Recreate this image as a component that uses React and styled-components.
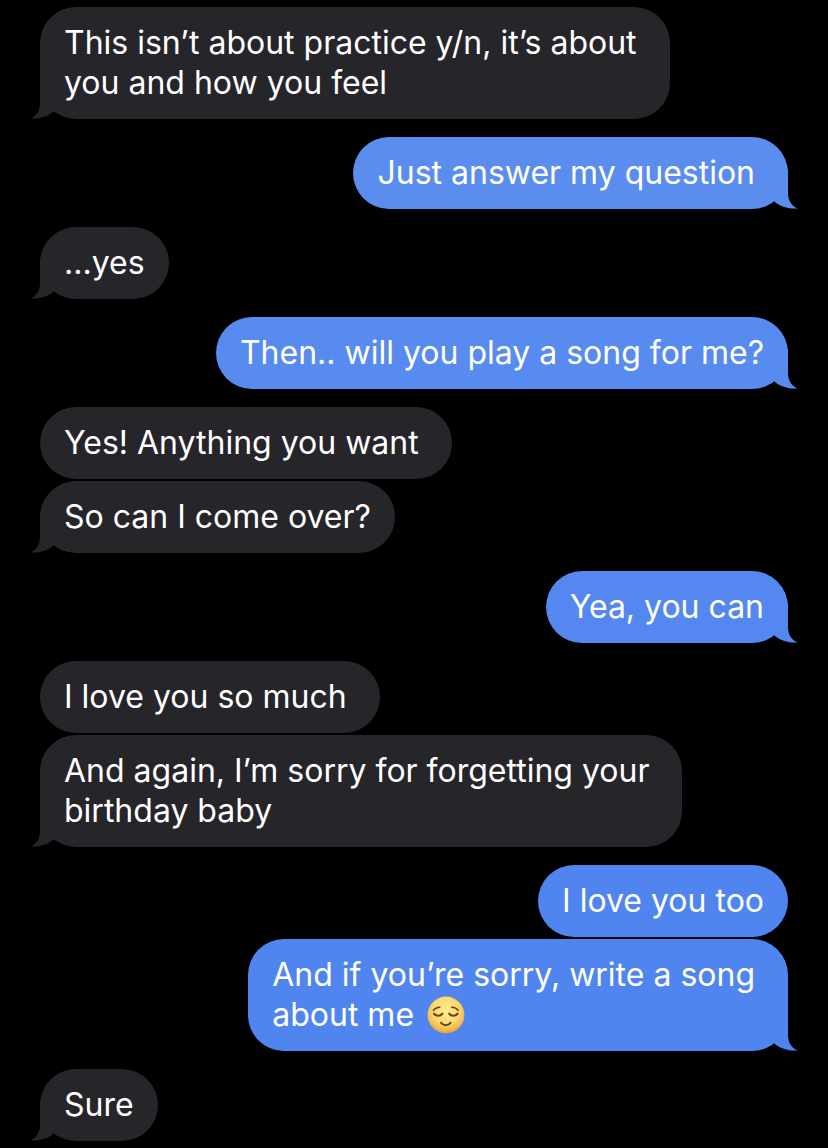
import React from "react";
import styled, { createGlobalStyle } from "styled-components";

const GlobalStyle = createGlobalStyle`
  body {
    margin: 0;
    background: #000;
    overflow-x: hidden;
  }
`;

const Thread = styled.main`
  display: flex;
  flex-direction: column;
  gap: 18px;
  padding: 7px 40px;
  font-family: Inter, "Liberation Sans", sans-serif;
  font-size: 32px;
  line-height: 40px;
  color: #fff;
`;

const Group = styled.section`
  display: flex;
  flex-direction: column;
  align-items: ${(props) => (props.$mine ? "flex-end" : "flex-start")};
  gap: 2px;
`;

const Bubble = styled.div`
  position: relative;
  box-sizing: border-box;
  max-width: 86%;
  padding: 16px 24px;
  border-radius: 36px;
  background: ${(props) => props.$color};
`;

const Text = styled.p`
  position: relative;
  margin: 0;
  white-space: pre-wrap;
`;

const TailShape = styled.svg`
  position: absolute;
  bottom: 0;
  ${(props) => (props.$mine ? "right: -10px;" : "left: -10px;")}
  ${(props) => (props.$mine ? "" : "transform: scaleX(-1);")}
`;

const Face = styled.svg`
  width: 38px;
  height: 38px;
  margin: -6px 0 -2px 4px;
  vertical-align: middle;
`;

const Tail = ({ mine, color }) => (
  <TailShape $mine={mine} width="46" height="40" viewBox="0 0 46 40">
    <path
      d="M36 0 V24 C36 31 39 37 46 39.5 C37 40 28 38 22 32 L0 20 V0 Z"
      fill={color}
    />
  </TailShape>
);

const RelievedFace = () => (
  <Face viewBox="0 0 38 38" role="img" aria-label="relieved face">
    <defs>
      <radialGradient id="skin" cx="0.5" cy="0.38" r="0.64">
        <stop offset="0" stopColor="#fdeb90" />
        <stop offset="0.55" stopColor="#fada70" />
        <stop offset="0.85" stopColor="#f3b64a" />
        <stop offset="1" stopColor="#dd9034" />
      </radialGradient>
    </defs>
    <circle cx="19" cy="19" r="18.4" fill="url(#skin)" />
    <g fill="none" stroke="#6b3f18" strokeLinecap="round">
      <path strokeWidth="1.6" d="M6.4 14.4 C8 12.2 10.2 11.3 12.8 11.2" />
      <path strokeWidth="1.6" d="M31.2 14.4 C29.6 12.2 27.4 11.3 24.8 11.2" />
      <path strokeWidth="2" d="M7 17.6 C8.8 20.4 13.6 20.4 15.4 17.6" />
      <path strokeWidth="2" d="M22.2 17.6 C24 20.4 28.8 20.4 30.6 17.6" />
      <path strokeWidth="2" d="M14 26.8 C16.2 30 21.4 30 23.6 26.8" />
    </g>
  </Face>
);

const groups = [
  { mine: false, messages: ["This isn’t about practice y/n, it’s about \nyou and how you feel"] },
  { mine: true, color: "#5b8def", messages: ["Just answer my question "] },
  { mine: false, messages: ["...yes"] },
  { mine: true, color: "#588bef", messages: ["Then.. will you play a song for me?"] },
  { mine: false, messages: ["Yes! Anything you want ", "So can I come over?"] },
  { mine: true, color: "#5487ef", messages: ["Yea, you can"] },
  { mine: false, messages: ["I love you so much ", "And again, I’m sorry for forgetting your \nbirthday baby"] },
  {
    mine: true,
    color: "#5085ef",
    messages: [
      "I love you too",
      <>
        {"And if you’re sorry, write a song \nabout me "}
        <RelievedFace />
      </>,
    ],
  },
  { mine: false, messages: ["Sure"] },
];

export default function App() {
  return (
    <Thread>
      <GlobalStyle />
      {groups.map((group, i) => {
        const color = group.color || "#26252a";
        return (
          <Group key={i} $mine={group.mine}>
            {group.messages.map((message, j) => (
              <Bubble key={j} $color={color}>
                {j === group.messages.length - 1 && (
                  <Tail mine={group.mine} color={color} />
                )}
                <Text>{message}</Text>
              </Bubble>
            ))}
          </Group>
        );
      })}
    </Thread>
  );
}
